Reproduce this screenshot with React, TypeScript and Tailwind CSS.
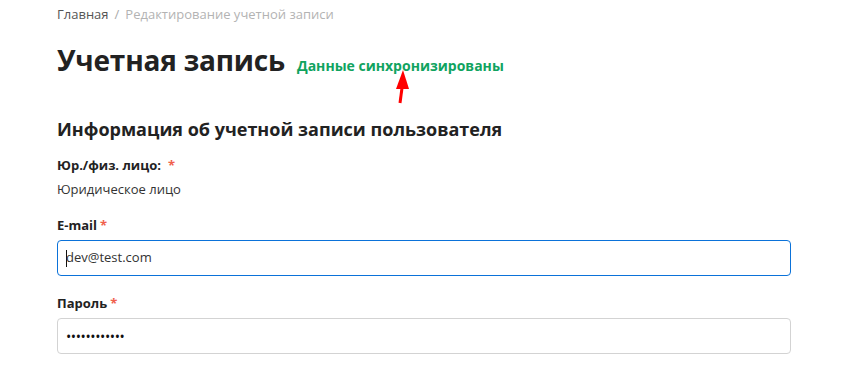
import React from 'react';

const font = { fontFamily: '"Open Sans", "Noto Sans", sans-serif' };

function Req() {
  return <span className="text-[#f0604d] ml-[3px]">*</span>;
}

export default function App() {
  return (
    <div className="w-[860px] h-[371px] bg-white overflow-hidden text-[#333]" style={font}>
      <div className="pl-[57px] w-[791px]">
        {/* хлебные крошки */}
        <div className="h-[29px] flex items-center text-[13px]">
          <span className="text-[#555]">Главная</span>
          <span className="text-[#aaa] mx-[6px]">/</span>
          <span className="text-[#b3b3b3]">Редактирование учетной записи</span>
        </div>

        <div className="relative flex items-baseline mt-[17px] h-[36px]">
          <h1 className="text-[28px] font-bold text-[#222] leading-none tracking-[-0.2px]">Учетная запись</h1>
          <span className="ml-[12px] text-[14px] font-bold text-[#10a35f]">Данные синхронизированы</span>
          <svg className="absolute left-[335px] top-[23px]" width="20" height="36" viewBox="0 0 20 36">
            <polygon points="11,1 4,20 17,20" fill="#ff0000" />
            <line x1="10" y1="19" x2="8" y2="34" stroke="#ff0000" strokeWidth="3" />
          </svg>
        </div>

        <h2 className="mt-[34px] text-[18px] font-bold text-[#222] leading-[26px]">
          Информация об учетной записи пользователя
        </h2>

        <div className="mt-[14px] text-[13px] font-bold text-[#222] leading-[18px]">
          Юр./физ. лицо:<span className="text-[#f0604d] ml-[7px]">*</span>
        </div>
        <div className="mt-[6px] text-[13px] text-[#333] leading-[18px]">Юридическое лицо</div>

        <div className="mt-[18px] text-[13px] font-bold text-[#222] leading-[18px]">
          E-mail<Req />
        </div>
        <div className="mt-[6px] h-[36px] border border-[#0b72d9] rounded-[4px] flex items-center pl-[8px] text-[13px] text-[#333]">
          <span className="w-px h-[17px] bg-[#111] mr-[-1px]" />
          <span>dev@test.com</span>
        </div>

        <div className="mt-[18px] text-[13px] font-bold text-[#222] leading-[18px]">
          Пароль<Req />
        </div>
        <div className="mt-[6px] h-[36px] border border-[#d3d3d3] rounded-[4px] flex items-center pl-[8px] text-[14px] text-[#111] tracking-[-0.4px]">
          ••••••••••••
        </div>
      </div>
    </div>
  );
}
